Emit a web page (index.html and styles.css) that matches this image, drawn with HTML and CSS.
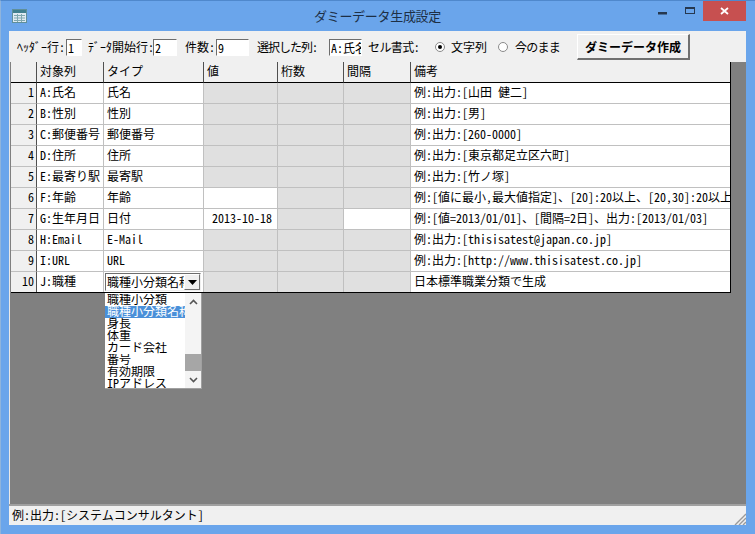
FILE: index.html
```html
<!DOCTYPE html>
<html lang="ja">
<head>
<meta charset="utf-8">
<title>ダミーデータ生成設定</title>
<link rel="stylesheet" href="styles.css">
</head>
<body>
<div class="window">
  <div class="titlebar">
    <svg class="appicon" width="15" height="14" viewBox="0 0 15 14"><rect x="0.5" y="0.5" width="14" height="13" fill="#dfeaf2" stroke="#5f8f9a"/><rect x="1" y="1" width="13" height="3" fill="#3f7f8f"/><path d="M2 6.5h11M2 9h11M2 11.5h11M5.5 5v8M9.5 5v8" stroke="#7fa8b0" fill="none"/></svg>
    <div class="title">ダミーデータ生成設定</div>
    <div class="winbtns">
      <span class="wb"><svg width="10" height="12" viewBox="0 0 10 12"><rect x="0" y="7" width="9" height="2.5" fill="#26384f"/></svg></span>
      <span class="wb"><svg width="10" height="10" viewBox="0 0 10 10"><rect x="0.5" y="1.5" width="9" height="6" fill="none" stroke="#26384f" stroke-width="1"/><rect x="0" y="1" width="10" height="2" fill="#26384f"/></svg></span>
      <span class="close"><svg width="9" height="8" viewBox="0 0 9 8"><path d="M1 1l7 6M8 1l-7 6" stroke="#fff" stroke-width="1.8" fill="none"/></svg></span>
    </div>
  </div>
  <div class="client">
    <div class="toolbar">
      <label class="lbl l1">ﾍｯﾀﾞｰ行:</label><input class="num w16" value="1">
      <label class="lbl l2">ﾃﾞｰﾀ開始行:</label><input class="num w24" value="2">
      <label class="lbl l3">件数:</label><input class="num w33" value="9">
      <label class="lbl l4">選択した列:</label><input class="num w33 m-sel" value="A:氏名">
      <label class="lbl l5">セル書式:</label>
      <span class="radio on"></span><span class="lbl rt1">文字列</span>
      <span class="radio"></span><span class="lbl rt2">今のまま</span>
      <button class="make">ダミーデータ作成</button>
    </div>
    <div class="gridarea">
      <table class="grid">
        <colgroup><col class="c0"><col class="c1"><col class="c2"><col class="c3"><col class="c4"><col class="c5"><col class="c6"></colgroup>
        <thead><tr><th></th><th>対象列</th><th>タイプ</th><th>値</th><th>桁数</th><th>間隔</th><th>備考</th></tr></thead>
        <tbody>
          <tr><td class="rh">1</td><td class="key">A:氏名</td><td>氏名</td><td class="na"></td><td class="na"></td><td class="na"></td><td>例:出力:[山田　健二]</td></tr>
          <tr><td class="rh">2</td><td class="key">B:性別</td><td>性別</td><td class="na"></td><td class="na"></td><td class="na"></td><td>例:出力:[男]</td></tr>
          <tr><td class="rh">3</td><td class="key">C:郵便番号</td><td>郵便番号</td><td class="na"></td><td class="na"></td><td class="na"></td><td>例:出力:[260-0000]</td></tr>
          <tr><td class="rh">4</td><td class="key">D:住所</td><td>住所</td><td class="na"></td><td class="na"></td><td class="na"></td><td>例:出力:[東京都足立区六町]</td></tr>
          <tr><td class="rh">5</td><td class="key">E:最寄り駅</td><td>最寄駅</td><td class="na"></td><td class="na"></td><td class="na"></td><td>例:出力:[竹ノ塚]</td></tr>
          <tr><td class="rh">6</td><td class="key">F:年齢</td><td>年齢</td><td></td><td class="na"></td><td class="na"></td><td>例:[値に最小,最大値指定]、[20]:20以上、[20,30]:20以上30未満</td></tr>
          <tr><td class="rh">7</td><td class="key">G:生年月日</td><td>日付</td><td class="val">2013-10-18</td><td class="na"></td><td></td><td>例:[値=2013/01/01]、[間隔=2日]、出力:[2013/01/03]</td></tr>
          <tr><td class="rh">8</td><td class="key">H:Email</td><td>E-Mail</td><td class="na"></td><td class="na"></td><td class="na"></td><td>例:出力:[thisisatest@japan.co.jp]</td></tr>
          <tr><td class="rh">9</td><td class="key">I:URL</td><td>URL</td><td class="na"></td><td class="na"></td><td class="na"></td><td>例:出力:[http://www.thisisatest.co.jp]</td></tr>
          <tr class="last"><td class="rh">10</td><td class="key">J:職種</td>
            <td class="combo-cell"><div class="combo"><span class="combo-text">職種小分類名称</span><span class="combo-btn"><svg width="9" height="5" viewBox="0 0 9 5"><path d="M0 0h9L4.5 5z" fill="#000"/></svg></span></div></td>
            <td class="na"></td><td class="na"></td><td class="na"></td><td>日本標準職業分類で生成</td></tr>
        </tbody>
      </table>
      <div class="dropdown">
        <ul class="items">
          <li>職種小分類</li>
          <li class="sel">職種小分類名称</li>
          <li>身長</li>
          <li>体重</li>
          <li>カード会社</li>
          <li>番号</li>
          <li>有効期限</li>
          <li>IPアドレス</li>
        </ul>
        <div class="sb">
          <svg class="sb-arrow" width="9" height="6" viewBox="0 0 9 6"><path d="M1 5l3.5-3.5L8 5" fill="none" stroke="#555" stroke-width="1.6"/></svg>
          <div class="sb-track"><div class="sb-thumb"></div></div>
          <svg class="sb-arrow" width="9" height="6" viewBox="0 0 9 6"><path d="M1 1l3.5 3.5L8 1" fill="none" stroke="#555" stroke-width="1.6"/></svg>
        </div>
      </div>
    </div>
    <div class="status">
      <span>例:出力:[システムコンサルタント]</span>
      <svg class="grip" width="12" height="12" viewBox="0 0 12 12"><path d="M12 1L1 12M12 5L5 12M12 9L9 12" stroke="#9a9a9a" stroke-width="1.4" fill="none"/></svg>
    </div>
  </div>
</div>
</body>
</html>
```
FILE: styles.css
```css
* { box-sizing: border-box; }
html, body { margin: 0; padding: 0; }
body {
  width: 755px;
  height: 534px;
  overflow: hidden;
  background: #5f93c9;
  font-family: "Noto Sans CJK JP", "Liberation Mono", monospace;
  font-feature-settings: "hwid";
  font-size: 12px;
  color: #000;
}
.window {
  width: 755px;
  height: 534px;
  padding: 0 9px 9px 8px;
  background: #6aa5eb;
  border-left: 1px solid #8fb4dc;
  border-top: 1px solid #4f88cc;
  display: flex;
  flex-direction: column;
}
.titlebar {
  height: 30px;
  flex: none;
  position: relative;
  display: flex;
  align-items: flex-start;
}
.appicon { position: absolute; left: 3px; top: 8px; }
.title {
  width: 100%;
  text-align: center;
  font-size: 13px;
  letter-spacing: -0.3px;
  line-height: 30px;
  color: #1d2f45;
  font-feature-settings: normal;
}
.winbtns {
  position: absolute;
  right: 0;
  top: 0;
  display: flex;
  align-items: flex-start;
}
.wb { width: 27px; height: 20px; display: flex; align-items: center; justify-content: center; }
.close {
  width: 43px;
  height: 20px;
  background: #c75050;
  display: flex;
  align-items: center;
  justify-content: center;
}
.client {
  flex: 1;
  min-height: 0;
  display: flex;
  flex-direction: column;
  background: #f0f0f0;
}
.toolbar {
  height: 31px;
  flex: none;
  display: flex;
  align-items: center;
  padding-left: 8px;
  padding-top: 1px;
  white-space: nowrap;
}
.lbl { line-height: 16px; }
.num {
  height: 17px;
  padding: 0 0 0 1px;
  margin: 0;
  border: 1px solid #fff;
  border-top-color: #6d6d6d;
  border-left-color: #6d6d6d;
  background: #fff;
  font: inherit;
  font-feature-settings: "hwid";
  line-height: 15px;
  outline: none;
}
.w16 { width: 16px; margin-left: 1px; }
.w24 { width: 24px; margin-left: -1px; }
.w33 { width: 33px; margin-left: 1px; }
.l2 { margin-left: 6px; }
.l3 { margin-left: 8px; }
.l4 { margin-left: 8px; letter-spacing: -1px; }
.w33.m-sel { margin-left: 12px; }
.l5 { margin-left: 6px; letter-spacing: -0.6px; }
.radio {
  width: 10px;
  height: 10px;
  border-radius: 50%;
  border: 1px solid #8a8a8a;
  background: #fff;
  margin-left: 16px;
  position: relative;
  flex: none;
}
.radio.on::after {
  content: "";
  position: absolute;
  left: 2px;
  top: 2px;
  width: 4px;
  height: 4px;
  border-radius: 50%;
  background: #000;
}
.rt1 { margin-left: 6px; }
.rt2 { margin-left: 7px; letter-spacing: -0.75px; }
.rt1 + .radio { margin-left: 11px; }
.make {
  margin: 0 0 0 17px;
  padding: 0;
  width: 113px;
  height: 26px;
  background: #f0f0f0;
  border: 1px solid #fff;
  border-right: 2px solid #707070;
  border-bottom: 2px solid #707070;
  font: inherit;
  font-weight: 700;
  font-feature-settings: normal;
  color: #000;
}
.gridarea {
  flex: 1;
  min-height: 0;
  position: relative;
  background: #808080;
  border-left: 1px solid #e8e8e8;
  padding-left: 1px;
}
.grid {
  table-layout: fixed;
  width: 720px;
  border-collapse: separate;
  border-spacing: 0;
  background: #fff;
  border-right: 1px solid #000;
  border-bottom: 1px solid #000;
}
.c0 { width: 25px; }
.c1 { width: 67px; }
.c2 { width: 100px; }
.c3 { width: 74px; }
.c4 { width: 66px; }
.c5 { width: 67px; }
.c6 { width: 320px; }
.grid th {
  height: 21px;
  padding: 0 0 2px 3px;
  background: #f0f0f0;
  font-weight: 400;
  text-align: left;
  border-bottom: 1px solid #000;
  border-left: 1px solid #505050;
  line-height: 18px;
  overflow: hidden;
  white-space: nowrap;
}
.grid th:first-child { border-left: 0; }
.grid td {
  height: 21px;
  padding: 0 0 2px 3px;
  border-left: 1px solid #c0c0c0;
  border-bottom: 1px solid #c0c0c0;
  line-height: 18px;
  overflow: hidden;
  white-space: nowrap;
}
.grid .last td { border-bottom: 0; height: 20px; }
.grid td.rh {
  background: #f0f0f0;
  text-align: right;
  padding: 0 2px 2px 0;
  border-left: 0;
}
.grid td.key { border-left-color: #505050; }
.grid td.na { background: #e0e0e0; }
.grid td.val { text-align: right; padding: 0 5px 2px 0; }
.grid td.combo-cell { padding: 1px 2px 1px 1px; }
.combo {
  height: 18px;
  display: flex;
  align-items: stretch;
  border: 1px solid #6d6d6d;
  border-right-color: #f0f0f0;
  border-bottom-color: #f0f0f0;
  background: #fff;
  overflow: hidden;
}
.combo-text { flex: 1; min-width: 0; overflow: hidden; padding-left: 1px; line-height: 16px; }
.combo-btn {
  width: 16px;
  flex: none;
  background: #f0f0f0;
  border: 1px solid #fff;
  border-right-color: #707070;
  border-bottom-color: #707070;
  display: flex;
  align-items: center;
  justify-content: center;
}
.dropdown {
  position: absolute;
  left: 95px;
  top: 231px;
  width: 97px;
  height: 96px;
  background: #fff;
  border-right: 1px solid #a0a0a0;
  border-bottom: 1px solid #a0a0a0;
  display: flex;
}
.items {
  list-style: none;
  margin: 0;
  padding: 1px 0 0 0;
  width: 80px;
  overflow: hidden;
  flex: none;
}
.items li {
  height: 12px;
  line-height: 10px;
  white-space: nowrap;
  overflow: hidden;
  padding-left: 2px;
}
.items .sel { background: #4a90d9; color: #fff; }
.sb {
  flex: 1;
  display: flex;
  flex-direction: column;
  align-items: center;
  background: #f4f4f4;
  padding: 6px 0 5px;
}
.sb-track { flex: 1; width: 100%; position: relative; }
.sb-thumb {
  position: absolute;
  left: 0;
  right: 0;
  bottom: 6px;
  height: 17px;
  background: #a6a6a6;
}
.status {
  height: 21px;
  flex: none;
  border-top: 2px solid #a0a0a0;
  display: flex;
  align-items: center;
  padding: 0 0 3px 3px;
  position: relative;
  background: #f0f0f0;
}
.grip { position: absolute; right: 0; bottom: 0; }
```
